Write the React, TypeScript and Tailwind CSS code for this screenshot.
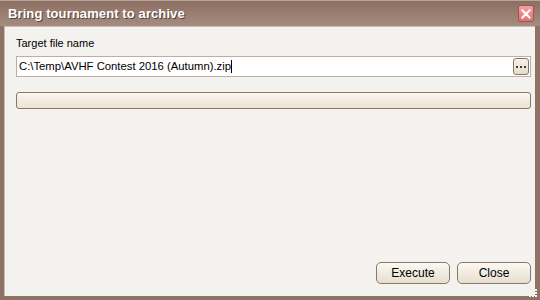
export default function App() {
  return (
    <div
      className="relative w-[540px] h-[300px] flex flex-col bg-[#8e7265] text-[#000] text-[11px]"
      style={{ fontFamily: '"Liberation Sans", Arial, sans-serif' }}
    >
      {/* title bar */}
      <div className="h-[26px] shrink-0 flex items-center justify-between pl-[8px] pr-[6px] bg-gradient-to-b from-[#8c6f62] to-[#a68c80] border-t border-[#b9a49a]">
        <span className="text-white font-bold text-[13px] tracking-[0.1px] [text-shadow:1px_1px_0_#5b4338]">
          Bring tournament to archive
        </span>
        <button className="w-[16px] h-[17px] rounded-[2px] border border-[#a05252] bg-gradient-to-b from-[#f2a0a0] to-[#e07070] flex items-center justify-center">
          <svg width="10" height="10" viewBox="0 0 10 10">
            <path d="M1.5 1.5 L8.5 8.5 M8.5 1.5 L1.5 8.5" stroke="white" strokeWidth="2.2" strokeLinecap="square" />
          </svg>
        </button>
      </div>

      {/* body */}
      <div className="flex-1 flex ml-[4px] mr-[5px] mb-[4px] border-l border-t border-[#c8bcb4] bg-[#f4f2ee]">
        <div className="flex-1 flex flex-col pl-[11px] pr-[4px] pt-[10px] pb-[12px]">
          <div className="leading-[13px] text-[11px]">Target file name</div>
          <div className="mt-[6px] h-[21px] flex items-center bg-white border border-[#bcaea6] pl-[2px] pr-[1px]">
            <span className="flex-1 text-[11.3px] leading-[13px]">
              C:\Temp\AVHF Contest 2016 (Autumn).zip
              <span className="inline-block w-px h-[13px] bg-black align-middle -mt-[2px]" />
            </span>
            <button className="w-[16px] h-[17px] rounded-[3px] border border-[#8a7468] bg-gradient-to-b from-[#f6f2ea] to-[#e4dccd] flex items-center justify-center gap-[2px]">
              <span className="w-[2px] h-[2px] bg-[#4a3a33]" />
              <span className="w-[2px] h-[2px] bg-[#4a3a33]" />
              <span className="w-[2px] h-[2px] bg-[#4a3a33]" />
            </button>
          </div>
          <div className="mt-[15px] h-[17px] rounded-[3px] border border-[#8c7668] bg-gradient-to-b from-[#fbf9f4] via-[#f2ece0] to-[#ece4d4]" />

          <div className="flex-1" />

          <div className="flex justify-end gap-[7px]">
            <button className="w-[74px] h-[22px] rounded-[5px] border border-[#8c7668] bg-gradient-to-b from-[#fbf9f3] to-[#e6dfcf] text-[12px] text-[#000]">
              Execute
            </button>
            <button className="w-[74px] h-[22px] rounded-[5px] border border-[#8c7668] bg-gradient-to-b from-[#fbf9f3] to-[#e6dfcf] text-[12px] text-[#000]">
              Close
            </button>
          </div>
        </div>
      </div>

      {/* size grip */}
      <svg className="absolute right-[2px] bottom-[2px]" width="9" height="9" viewBox="0 0 9 9">
        <g fill="#f4f2ee">
          <rect x="6" y="0" width="2" height="2" />
          <rect x="3" y="3" width="2" height="2" />
          <rect x="6" y="3" width="2" height="2" />
          <rect x="0" y="6" width="2" height="2" />
          <rect x="3" y="6" width="2" height="2" />
          <rect x="6" y="6" width="2" height="2" />
        </g>
      </svg>
    </div>
  );
}
